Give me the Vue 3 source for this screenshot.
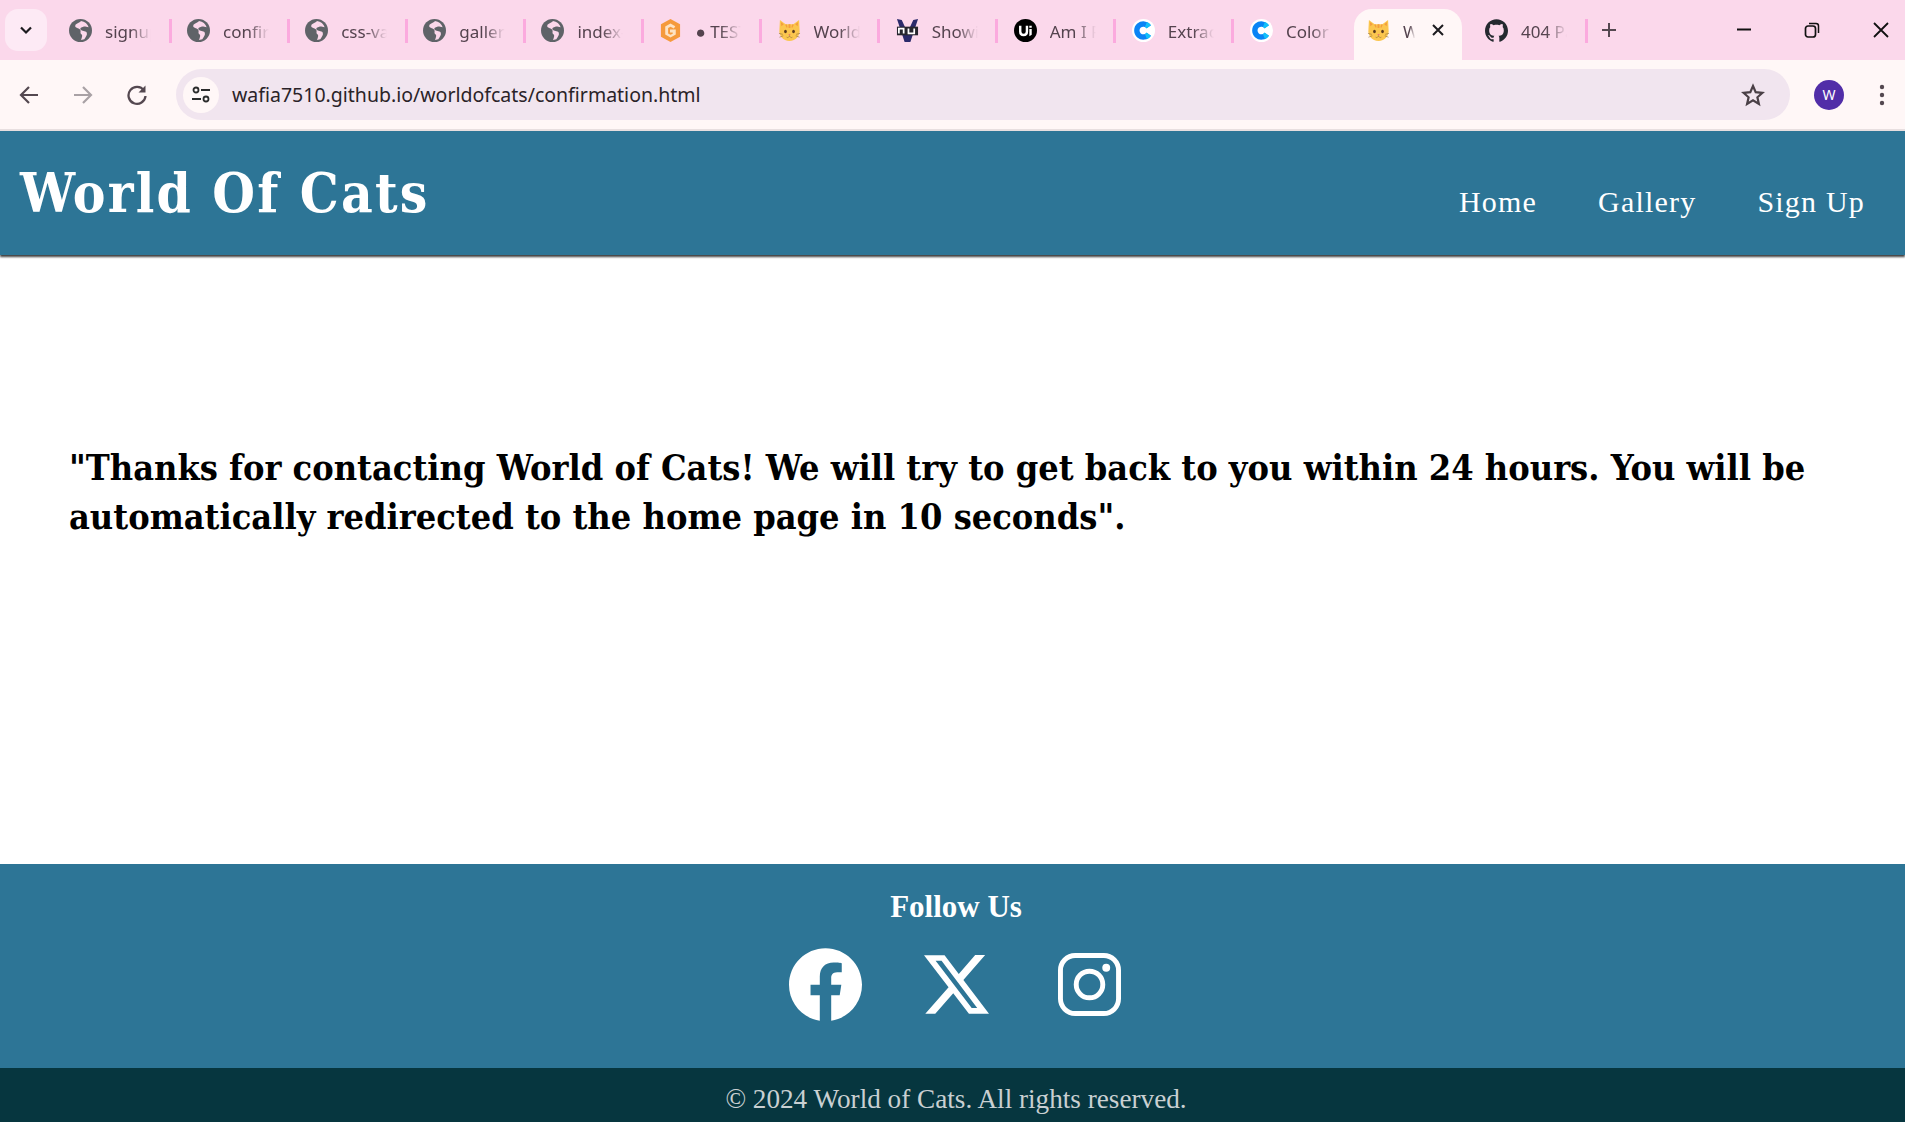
<script setup>
const tabs = [
  { icon: "globe", title: "signup" },
  { icon: "globe", title: "confirmation" },
  { icon: "globe", title: "css-variables" },
  { icon: "globe", title: "gallery" },
  { icon: "globe", title: "index-" },
  { icon: "g", title: "● TEST" },
  { icon: "cat", title: "World" },
  { icon: "nu", title: "Showing" },
  { icon: "ui", title: "Am I Responsive" },
  { icon: "c", title: "Extract" },
  { icon: "c", title: "Color" },
  { icon: "cat", title: "World", active: true },
  { icon: "github", title: "404 Page" },
];
</script>

<template>
  <div class="page">
    <div class="browser">
      <div class="tabstrip">
        <button class="tab-menu">
          <svg width="16" height="16" viewBox="0 0 16 16"><path d="M3 5.500l5 5 5-5" fill="none" stroke="#1c1b1f" stroke-width="2.200" /></svg>
        </button>
        <div
          v-for="(tab, i) in tabs"
          :key="i"
          class="tab"
          :class="{ active: tab.active, 'no-sep': tabs[i + 1] && tabs[i + 1].active }"
        >
          <svg v-if="tab.icon === 'globe'" class="favicon" viewBox="0 0 24 24">
            <circle cx="12" cy="12" r="12" fill="#5f6368" />
            <path d="M12.500 2C11 4.500 7 4 6.500 7 6 9.500 10 9 11.500 11s-.5 3.500 1.500 5c1.500 1 .5 3.500-.5 6l3.500-1c1.500-2.500 3.500-4.500 2.500-7-1.500-2-5-1-6.500-3-1-1.500 1-2.500 3-3 1.500-.5 3.500.5 5.500.5C19.500 5 16.500 2.500 12.500 2z" fill="#fbd8eb" />
          </svg>
          <svg v-else-if="tab.icon === 'g'" class="favicon" viewBox="0 0 24 24">
            <path d="M12 0l10 5.500v13L12 24 2 18.500v-13z" fill="#f59a3c" />
            <path d="M17 7.500l-5-2.800-5.500 3v8.600l5.500 3 5.500-3V11h-6v3h2.800v1.500L12 16.500l-2.500-1.500V9.400L12 8l3.500 2z" fill="#fde3c4" />
          </svg>
          <svg v-else-if="tab.icon === 'cat'" class="favicon" viewBox="0 0 24 24">
            <path d="M2 1l6 4.500h8L22 1l.5 10c1 6-4 12-10.500 12S.500 17 1.500 11z" fill="#fbc64e" />
            <path d="M11 5.500h2v4h-2zM7.500 6l1.500-.5 1 3-1 .5zM16.500 6L15 5.500l-1 3 1 .5zM3 3l3 2.500-2.500 2zM21 3l-3 2.500 2.500 2z" fill="#f39c3d" />
            <ellipse cx="7.800" cy="13" rx="1.400" ry="1.800" fill="#5b3a1e" />
            <ellipse cx="16.200" cy="13" rx="1.400" ry="1.800" fill="#5b3a1e" />
            <path d="M10.800 16h2.400L12 17.500z" fill="#ea5f7a" />
            <path d="M9 19c1.500 1 2.300 0 3-1.500.7 1.500 1.500 2.500 3 1.500M1 15l4 1M23 15l-4 1M1.500 19l4-1.500M22.500 19l-4-1.500" fill="none" stroke="#8a6a3a" stroke-width=".6" />
          </svg>
          <svg v-else-if="tab.icon === 'nu'" class="favicon" viewBox="0 0 24 24">
            <path d="M1 0l5 1 6 13 6-13 5-1-8 24h-6z" fill="#2b2a6b" />
            <rect x="1" y="8" width="22" height="9" fill="#26262e" />
            <path d="M3 15v-5h5v5M13 10v5h6v-5" fill="none" stroke="#fff" stroke-width="1.800" />
          </svg>
          <svg v-else-if="tab.icon === 'ui'" class="favicon" viewBox="0 0 24 24">
            <circle cx="12" cy="12" r="12" fill="#000" />
            <path d="M6.500 7v6c0 5 7 5 7 0V7" fill="none" stroke="#fff" stroke-width="2.500" />
            <path d="M16 10.500h2.500v6L16 18zM16 7h2.500v2.200H16z" fill="#fff" />
          </svg>
          <svg v-else-if="tab.icon === 'c'" class="favicon" viewBox="0 0 24 24">
            <circle cx="12" cy="12" r="12" fill="#fff" />
            <path d="M17.500 8.200A6.800 6.800 0 1 0 17.500 15.800" fill="none" stroke="#0a84f5" stroke-width="5.600" />
            <path d="M14.500 5.800A6.800 6.800 0 0 1 17.500 8.200M14.500 18.200A6.800 6.800 0 0 0 17.500 15.800" fill="none" stroke="#12c0f9" stroke-width="5.600" />
          </svg>
          <svg v-else class="favicon" viewBox="0 0 24 24">
            <path d="M12 .297c-6.630 0-12 5.373-12 12 0 5.303 3.438 9.800 8.205 11.385.6.113.82-.258.82-.577 0-.285-.01-1.040-.015-2.040-3.338.724-4.042-1.610-4.042-1.610C4.422 18.070 3.633 17.700 3.633 17.700c-1.087-.744.084-.729.084-.729 1.205.084 1.838 1.236 1.838 1.236 1.070 1.835 2.809 1.305 3.495.998.108-.776.417-1.305.76-1.605-2.665-.3-5.466-1.332-5.466-5.930 0-1.310.465-2.380 1.235-3.220-.135-.303-.54-1.523.105-3.176 0 0 1.005-.322 3.300 1.230.96-.267 1.980-.399 3-.405 1.020.006 2.040.138 3 .405 2.280-1.552 3.285-1.230 3.285-1.230.645 1.653.24 2.873.12 3.176.765.84 1.230 1.910 1.230 3.220 0 4.610-2.805 5.625-5.475 5.920.42.36.81 1.096.81 2.220 0 1.606-.015 2.896-.03 3.286 0 .315.21.69.825.57C20.565 22.092 24 17.592 24 12.297c0-6.627-5.373-12-12-12" fill="#24292f" />
          </svg>
          <span class="tab-title">{{ tab.title }}</span>
          <svg v-if="tab.active" class="tab-close" width="14" height="14" viewBox="0 0 14 14"><path d="M2 2l10 10M12 2L2 12" stroke="#1c1b1f" stroke-width="2" /></svg>
        </div>
        <svg class="new-tab" width="18" height="18" viewBox="0 0 18 18"><path d="M9 2v14M2 9h14" stroke="#544850" stroke-width="2" /></svg>
        <div class="win-controls">
          <svg width="16" height="16" viewBox="0 0 16 16"><path d="M1 7.500h14" stroke="#111" stroke-width="2" /></svg>
          <svg width="16" height="16" viewBox="0 0 16 16"><rect x="1.500" y="4" width="10" height="11" rx="2.500" fill="none" stroke="#111" stroke-width="1.700" /><path d="M5 1.500h7a2.500 2.500 0 0 1 2.500 2.500v7" fill="none" stroke="#111" stroke-width="1.500" /></svg>
          <svg width="18" height="18" viewBox="0 0 18 18"><path d="M2 2l14 14M16 2L2 16" stroke="#111" stroke-width="1.800" /></svg>
        </div>
      </div>

      <div class="toolbar">
        <svg class="nav-btn" width="22" height="22" viewBox="0 0 22 22"><path d="M20 11H3M11 3l-8 8 8 8" fill="none" stroke="#544850" stroke-width="2.200" /></svg>
        <svg class="nav-btn" width="22" height="22" viewBox="0 0 22 22"><path d="M2 11h17M11 3l8 8-8 8" fill="none" stroke="#a9a1a5" stroke-width="2.200" /></svg>
        <svg class="nav-btn" width="22" height="22" viewBox="0 0 22 22"><path d="M18 6.500A8.500 8.500 0 1 0 19.500 12" fill="none" stroke="#544850" stroke-width="2.300" /><path d="M19.500 1.500v7h-7z" fill="#544850" /></svg>
        <div class="omnibox">
          <span class="site-btn">
            <svg width="20" height="20" viewBox="0 0 20 20">
              <circle cx="5" cy="5" r="2.500" fill="none" stroke="#2b2b2b" stroke-width="1.800" />
              <path d="M10 5h9M1 14h9" stroke="#2b2b2b" stroke-width="2" />
              <circle cx="15" cy="14" r="2.500" fill="none" stroke="#2b2b2b" stroke-width="1.800" />
            </svg>
          </span>
          <span class="url">wafia7510.github.io/worldofcats/confirmation.html</span>
          <svg class="star" width="24" height="24" viewBox="0 0 24 24"><path d="M12 3l2.700 6.200 6.800.6-5.100 4.500 1.500 6.600L12 17.400l-5.900 3.500 1.500-6.600-5.100-4.500 6.800-.6z" fill="none" stroke="#4a4046" stroke-width="2.200" /></svg>
        </div>
        <span class="avatar">W</span>
        <svg class="kebab" width="6" height="24" viewBox="0 0 6 24"><circle cx="3" cy="4" r="2.200" fill="#544850" /><circle cx="3" cy="12" r="2.200" fill="#544850" /><circle cx="3" cy="20" r="2.200" fill="#544850" /></svg>
      </div>
    </div>

    <header class="site-header">
      <h1 class="logo">World Of Cats</h1>
      <nav class="site-nav">
        <a>Home</a>
        <a>Gallery</a>
        <a>Sign Up</a>
      </nav>
    </header>

    <main class="content">
      <h2>"Thanks for contacting World of Cats! We will try to get back to you within 24 hours. You will be automatically redirected to the home page in 10 seconds".</h2>
    </main>

    <footer>
      <div class="follow">
        <h3>Follow Us</h3>
        <div class="socials">
          <svg class="fb" viewBox="0 0 24 24"><path d="M24 12.073c0-6.627-5.373-12-12-12s-12 5.373-12 12c0 5.990 4.388 10.954 10.125 11.854v-8.385H7.078v-3.470h3.047V9.430c0-3.007 1.792-4.669 4.533-4.669 1.312 0 2.686.235 2.686.235v2.953H15.830c-1.491 0-1.956.925-1.956 1.874v2.250h3.328l-.532 3.470h-2.796v8.385C19.612 23.027 24 18.062 24 12.073z" fill="#fff" /></svg>
          <svg class="tw" viewBox="0 0 24 24"><path d="M18.901 1.153h3.680l-8.040 9.190L24 22.846h-7.406l-5.800-7.584-6.638 7.584H.474l8.600-9.830L0 1.154h7.594l5.243 6.932ZM17.610 20.644h2.039L6.486 3.240H4.298Z" fill="#fff" /></svg>
          <svg class="ig" viewBox="0 0 64 64">
            <rect x="2.500" y="2.500" width="59" height="59" rx="15" fill="none" stroke="#fff" stroke-width="5" />
            <circle cx="32" cy="32" r="13.500" fill="none" stroke="#fff" stroke-width="5" />
            <circle cx="49" cy="15" r="4" fill="#fff" />
          </svg>
        </div>
      </div>
      <p class="copyright">© 2024 World of Cats. All rights reserved.</p>
    </footer>
  </div>
</template>

<style>
html,
body {
  overflow: hidden;
}
</style>

<style scoped>
.page {
  display: flex;
  flex-direction: column;
  height: 1122px;
  background: #fff;
  font-family: "Liberation Serif", serif;
}

.browser {
  font-family: "Noto Sans", "Open Sans", sans-serif;
}

.tabstrip {
  display: flex;
  align-items: flex-end;
  height: 60px;
  padding-left: 5px;
  background: #fbd8eb;
}

.tab-menu {
  display: flex;
  align-items: center;
  justify-content: center;
  align-self: flex-start;
  width: 42px;
  height: 42px;
  margin: 9px 5px 0 0;
  padding: 0;
  border: 0;
  border-radius: 13px;
  background: #fdeaf5;
}

.tab {
  position: relative;
  display: flex;
  align-items: center;
  flex: none;
  width: 118.100px;
  height: 51px;
  padding: 0 0 0 17px;
  box-sizing: border-box;
  color: #54434e;
  font-size: 17px;
}

.tab::after {
  content: "";
  position: absolute;
  right: -1.500px;
  top: 10px;
  width: 3px;
  height: 24px;
  background: #fbaade;
}

.tab:last-of-type {
  width: 115px;
  padding-left: 14px;
}

.tab.no-sep::after,
.tab.active::after {
  display: none;
}

.tab.active {
  background: #fff7f7;
  border-radius: 18px 18px 0 0;
  margin: 0 6px 0 3px;
  width: 108px;
  padding-left: 13px;
}

.tab.active::before {
  content: "";
  position: absolute;
  left: -14px;
  right: -14px;
  bottom: 0;
  height: 14px;
  background:
    radial-gradient(circle at 0 0, #fbd8eb 14px, transparent 14.500px) left / 14px 14px no-repeat,
    radial-gradient(circle at 100% 0, #fbd8eb 14px, transparent 14.500px) right / 14px 14px no-repeat,
    linear-gradient(#fff7f7, #fff7f7) center / calc(100% - 28px) 14px no-repeat;
}

.favicon {
  position: relative;
  flex: none;
  width: 23px;
  height: 23px;
  margin-top: -9px;
}

.favicon.cat {
  width: 24px;
  height: 24px;
}

.tab-title {
  position: relative;
  flex: none;
  width: 46px;
  margin: -7px 0 0 13px;
  overflow: hidden;
  white-space: nowrap;
  -webkit-mask-image: linear-gradient(90deg, #000 55%, transparent);
  mask-image: linear-gradient(90deg, #000 55%, transparent);
}

.tab.active .tab-title {
  width: 12px;
}

.tab-close {
  position: relative;
  margin: -9px 0 0 16px;
}

.new-tab {
  align-self: flex-start;
  margin: 21px 0 0 14px;
}

.win-controls {
  display: flex;
  align-self: flex-start;
  align-items: center;
  gap: 52px;
  margin: 21px 15px 0 auto;
}

.toolbar {
  display: flex;
  align-items: center;
  height: 71px;
  padding: 0 0 0 18px;
  box-sizing: border-box;
  background: #fff7f7;
  border-bottom: 2px solid #e8dfe0;
}

.nav-btn {
  flex: none;
  margin-right: 32px;
}

.nav-btn:nth-of-type(3) {
  margin-right: 28px;
}

.omnibox {
  display: flex;
  flex: none;
  align-items: center;
  width: 1614px;
  height: 51px;
  box-sizing: border-box;
  padding: 0 25px 0 7px;
  border-radius: 26px;
  background: #f1e5ef;
}

.site-btn {
  display: flex;
  align-items: center;
  justify-content: center;
  width: 36px;
  height: 36px;
  border-radius: 50%;
  background: #fff7f7;
}

.url {
  margin-left: 13px;
  color: #2a2328;
  font-size: 19.500px;
}

.star {
  margin-left: auto;
}

.avatar {
  display: flex;
  flex: none;
  align-items: center;
  justify-content: center;
  width: 30px;
  height: 30px;
  margin-left: 24px;
  border-radius: 50%;
  background: #512da8;
  color: #fff;
  font-size: 14px;
}

.kebab {
  margin-left: 35px;
}

.site-header {
  position: relative;
  display: flex;
  flex: none;
  justify-content: space-between;
  align-items: center;
  height: 124px;
  padding: 0 40px 0 20px;
  box-sizing: border-box;
  background: #2d7596;
  box-shadow: 0 2px 2px #3f3f3f;
}

.logo {
  margin: 0;
  color: #fff;
  font-family: "DejaVu Serif Condensed", "DejaVu Serif", serif;
  font-size: 54.500px;
  font-weight: 700;
  letter-spacing: 2.200px;
}

.site-nav {
  display: flex;
  gap: 61px;
  margin-top: 17px;
}

.site-nav a {
  color: #fff;
  font-size: 30px;
  letter-spacing: 1.200px;
}

.content {
  flex: 1;
  padding: 188px 68px 0 69px;
}

.content h2 {
  margin: 0;
  color: #000;
  font-family: "DejaVu Serif Condensed", "DejaVu Serif", serif;
  font-size: 35.800px;
  font-weight: 700;
  line-height: 49px;
}

footer {
  flex: none;
  color: #fff;
}

.follow {
  display: flex;
  flex-direction: column;
  align-items: center;
  height: 204px;
  padding: 25px 0 0 4px;
  box-sizing: border-box;
  background: #2d7596;
}

.follow h3 {
  margin: 0;
  padding-left: 3px;
  font-size: 31px;
  font-weight: 700;
  line-height: 36px;
}

.socials {
  display: flex;
  align-items: center;
  gap: 64px;
  margin-top: 23px;
}

.socials svg {
  display: block;
}

.fb {
  width: 73px;
  height: 73px;
}

.tw {
  width: 65px;
  height: 65px;
  margin-left: -2px;
}

.ig {
  width: 63px;
  height: 63px;
  margin-left: 5px;
}

.copyright {
  display: flex;
  align-items: center;
  justify-content: center;
  height: 54px;
  margin: 0;
  padding: 8px 0 0 7px;
  box-sizing: border-box;
  background: #06363f;
  color: #c9d0d2;
  font-size: 27.200px;
}
</style>
